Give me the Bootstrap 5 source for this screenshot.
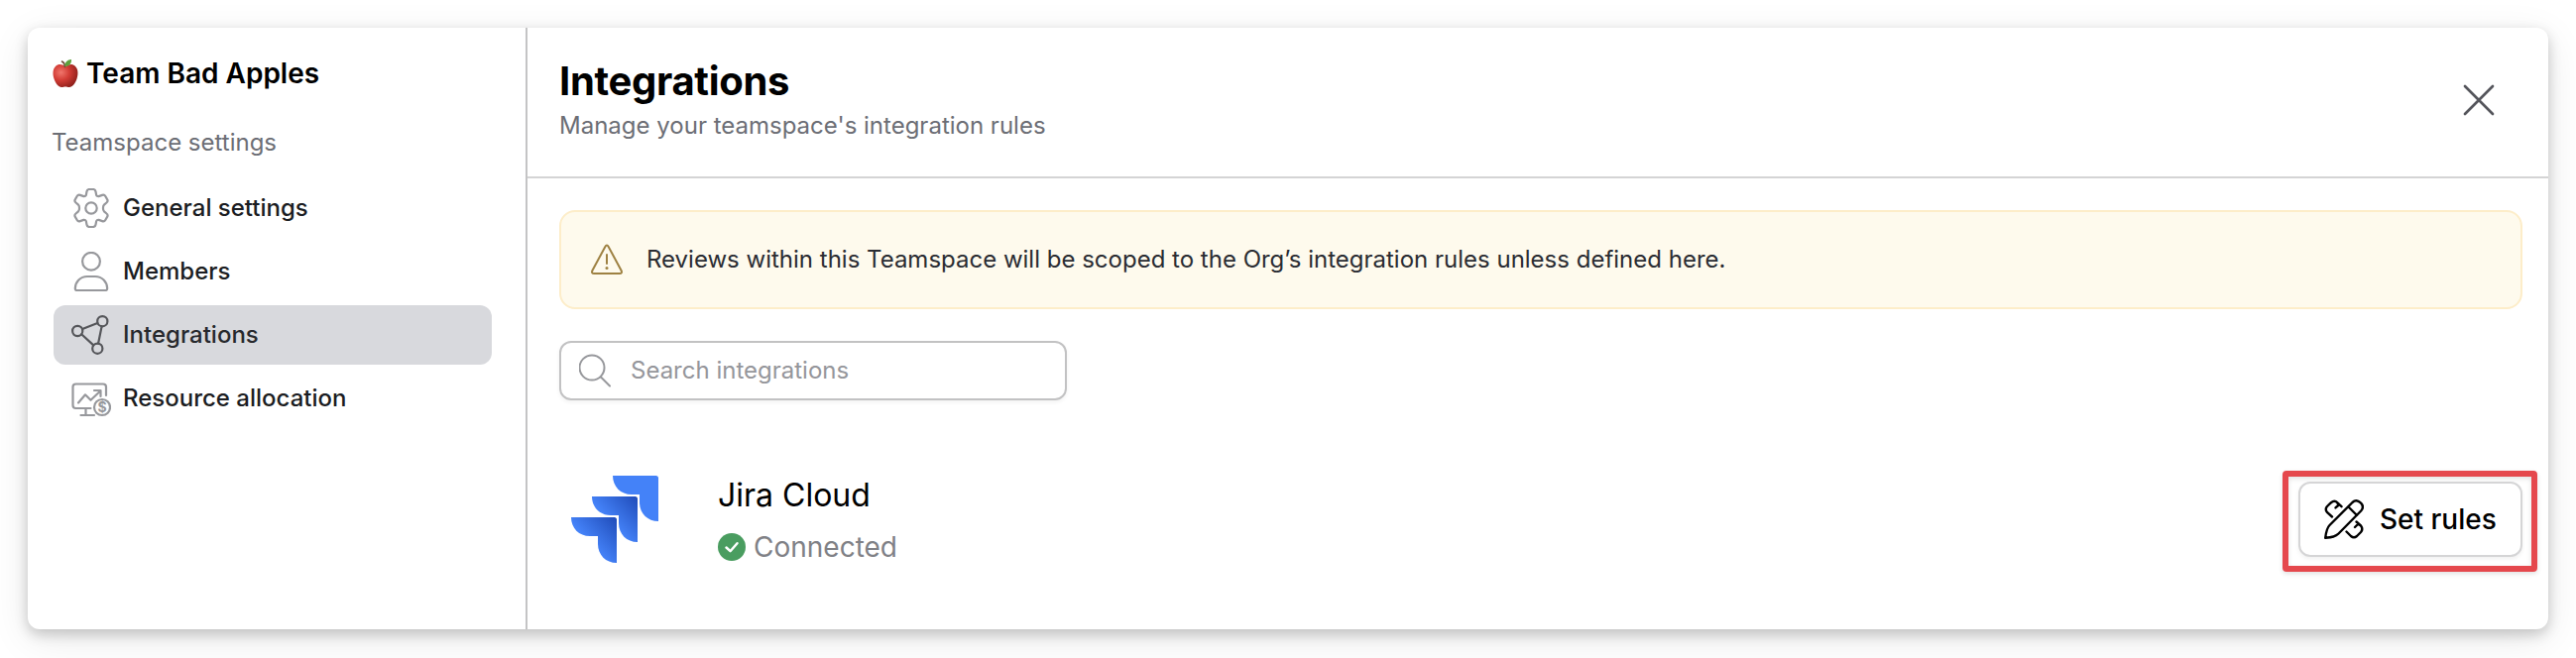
<!DOCTYPE html>
<html lang="en">
<head>
<meta charset="utf-8">
<title>Integrations</title>
<link href="https://cdn.jsdelivr.net/npm/bootstrap@5.3.0/dist/css/bootstrap.min.css" rel="stylesheet">
<style>
body{font-family:Inter,"Liberation Sans",sans-serif;font-size:24px;line-height:32px;color:#1b1d22;background:#fff;height:664px;overflow:hidden;padding:28px}
svg{display:block;flex:none;fill:none;stroke-linecap:round;stroke-linejoin:round}
.panel{height:607px;border-radius:12px;background:#fff;box-shadow:0 5px 14px rgba(0,0,0,.2),0 10px 40px rgba(0,0,0,.09)}
.side{width:504px;flex:none;border-right:2px solid #c4c4c5;padding:28px 34px 0 26px}
.team{font-size:28px;line-height:36px;font-weight:600;color:#000;gap:8px;margin-bottom:36px;margin-left:-1px}
.soft{color:#6c6e75}
.side .soft{line-height:32px;margin-bottom:20px;margin-left:-2px}
.side .nav{gap:4px}
.side .nav-link{height:60px;padding:0 18px;gap:12px;border-radius:12px;color:#1b1d22;font-weight:500}
.side .nav-link svg{stroke:#97989c;stroke-width:2.2}
.side .nav-link.active{background:#d8d9dd;color:#27292d}
.side .nav-link.active svg{stroke:#55565a}
.top-bar{height:152px;border-bottom:2px solid #d4d4d5;padding:0 50px 5px 32px}
.top-bar h1{font-size:40px;line-height:48px;font-weight:700;letter-spacing:-.3px;color:#000;margin:0}
.content-pad{padding:32px 26px 0 32px}
.notice{height:100px;border:2px solid #fdedc9;background:#fefaed;border-radius:16px;padding:0 30px;gap:24px;color:#2a2c32;margin-bottom:32px}
.search{width:512px;height:60px;border:2px solid #c2c2c3;border-radius:12px;padding:0 18px;gap:20px;color:#95969b;box-shadow:0 2px 4px rgba(0,0,0,.05)}
.integration{margin-top:71px;padding-left:12px;height:102px;margin-right:-15px}
.details{margin-left:60px;padding-top:5px}
.name{font-size:32px;line-height:40px;color:#000}
.status{font-size:28px;line-height:36px;color:#808186;gap:8px;margin-top:14px}
.marker{width:257px;height:102px;border:6px solid #e5484d;border-radius:4px;padding:5px 9px 9px 10px;box-shadow:0 2px 5px rgba(0,0,0,.12),inset 0 2px 5px rgba(0,0,0,.12)}
.rules{height:76px;border:2px solid #d5d5d6;border-radius:12px;background:#fff;color:#000;font-size:28px;font-weight:500;padding:0 0 0 24px;gap:16px;box-shadow:0 2px 4px rgba(0,0,0,.06)}
</style>
</head>
<body>
<div class="panel d-flex">
  <aside class="side">
    <div class="team d-flex align-items-center">
      <svg width="26" height="30" viewBox="0 0 26 30">
        <defs><radialGradient id="ap" cx=".32" cy=".35" r=".75"><stop offset="0" stop-color="#f0766c"/><stop offset=".45" stop-color="#d33d36"/><stop offset="1" stop-color="#8a1d19"/></radialGradient></defs>
        <path d="M13 8C16 6 20 5 23 8c3 3 3 8 1.500 12.500C23 25 20 29 17 29c-2 0-2.500-.6-4-.6s-2 .6-4 .6c-3 0-6-4-7.500-8.500C0 16 0 11 3 8c3-3 7-2 10 0z" fill="url(#ap)"/>
        <path d="M12.500 8.500C12.500 6 11.500 4 9.500 3" stroke="#6b4a35" stroke-width="1.600"/>
        <path d="M12.500 8C12 4 15 1 19 1c.3 4-2 7-6.500 7z" fill="#5da03c"/>
      </svg>
      <span>Team Bad Apples</span>
    </div>
    <div class="soft">Teamspace settings</div>
    <nav class="nav flex-column">
      <a class="nav-link d-flex align-items-center">
        <svg width="40" height="40" viewBox="0 0 40 40"><circle cx="20" cy="20" r="5.700"/><path d="M18.200 1h3.600c1.500 0 2.400.8 2.700 2.300l.6 3.200c.2 1.200 1.300 1.900 2.500 1.600l3.500-1.200c1.400-.5 2.500-.1 3.200 1.100l1.800 3.100c.8 1.300.5 2.500-.6 3.400l-2.500 2.200c-1.400 1.200-1.400 5.400 0 6.600l2.500 2.200c1.100.9 1.400 2.100.6 3.400l-1.800 3.100c-.7 1.200-1.800 1.600-3.200 1.100l-3.500-1.200c-1.200-.3-2.300.4-2.500 1.600l-.6 3.200c-.3 1.500-1.200 2.300-2.700 2.300h-3.600c-1.500 0-2.400-.8-2.700-2.300l-.6-3.200c-.2-1.200-1.300-1.900-2.500-1.600l-3.500 1.200c-1.400.5-2.500.1-3.200-1.100l-1.800-3.100c-.8-1.300-.5-2.500.6-3.400L7 23.300c1.400-1.200 1.400-5.400 0-6.600l-2.500-2.200c-1.100-.9-1.400-2.100-.6-3.400L5.700 8c.7-1.200 1.800-1.600 3.200-1.100l3.500 1.200c1.200.3 2.300-.4 2.500-1.600l.6-3.200C15.800 1.800 16.700 1 18.200 1z"/></svg>
        <span>General settings</span>
      </a>
      <a class="nav-link d-flex align-items-center">
        <svg width="40" height="40" viewBox="0 0 40 40"><circle cx="20" cy="9.800" r="8.900"/><path d="M16 25h8c7 0 12 5.500 12.200 12 0 1.400-.6 2-1.700 2h-29c-1.100 0-1.700-.6-1.700-2C4 30.500 9 25 16 25z"/></svg>
        <span>Members</span>
      </a>
      <a class="nav-link active d-flex align-items-center">
        <svg width="40" height="40" viewBox="0 0 40 40"><circle cx="31.300" cy="6.200" r="5.100"/><circle cx="6.200" cy="16" r="5.100"/><circle cx="26.300" cy="33.700" r="5.100"/><path d="M11.100 14.100 26.400 8.100M10.200 19.300 22.300 30.400M30.600 11.400 27.100 28.500"/></svg>
        <span>Integrations</span>
      </a>
      <a class="nav-link d-flex align-items-center">
        <svg width="40" height="40" viewBox="0 0 40 40"><path d="M35 17V8.500q0-3-3-3H4.500q-3 0-3 3V27q0 3 3 3H19.500M14.500 30.500V36M9.500 37H23M7 24.500l7-8.200 5.500 5.500L29 12.800M23 12h6.500v6"/><circle cx="31" cy="29" r="8"/><text x="31" y="34.200" text-anchor="middle" font-size="14" font-weight="700" fill="#97989c" stroke="none">$</text></svg>
        <span>Resource allocation</span>
      </a>
    </nav>
  </aside>
  <main class="flex-grow-1">
    <header class="top-bar d-flex align-items-center justify-content-between">
      <div>
        <h1>Integrations</h1>
        <div class="soft" style="margin-top:5px">Manage your teamspace's integration rules</div>
      </div>
      <svg width="40" height="40" viewBox="0 0 40 40" stroke="#55565c" stroke-width="2.700"><path d="M6 6 34 34M34 6 6 34"/></svg>
    </header>
    <div class="content-pad">
      <div class="notice d-flex align-items-center">
        <svg width="32" height="32" viewBox="0 0 32 32" stroke="#9e8142" stroke-width="2"><path d="M14.200 3.200q1.800-3.200 3.600 0L30.600 27q1.300 3-1.800 3H3.200q-3.100 0-1.800-3zM16 11v9"/><circle cx="16" cy="24.500" r="1.500" fill="#9e8142" stroke="none"/></svg>
        <span>Reviews within this Teamspace will be scoped to the Org’s integration rules unless defined here.</span>
      </div>
      <div class="search d-flex align-items-center">
        <svg width="32" height="34" viewBox="0 0 32 34" stroke="#97989c" stroke-width="2"><circle cx="13" cy="14" r="12.500"/><path d="M22 23.500 31 32.500"/></svg>
        <span>Search integrations</span>
      </div>
      <div class="integration d-flex align-items-start">
        <svg class="mt-1" width="88" height="90" viewBox="0 -1 88 90">
          <defs>
            <linearGradient id="jb" x1="1" y1="0" x2=".4" y2=".55"><stop offset="0" stop-color="#1f4bb8"/><stop offset="1" stop-color="#4482f8"/></linearGradient>
            <path id="jp" d="M0 0C0 11 8 19 19 19H27V27C27 38 35 46 46 46V2.500Q46 0 43.500 0Z"/>
          </defs>
          <use href="#jp" x="42" y="0" fill="#4482f8"/>
          <use href="#jp" x="21" y="21" fill="url(#jb)"/>
          <use href="#jp" x="0" y="42" fill="url(#jb)"/>
        </svg>
        <div class="details">
          <div class="name">Jira Cloud</div>
          <div class="status d-flex align-items-center">
            <svg width="28" height="28" viewBox="0 0 28 28"><circle cx="14" cy="14" r="14" fill="#4a9d60"/><path d="M8.500 14.500 12.500 18.200 19.500 10.200" stroke="#fff" stroke-width="2.500"/></svg>
            <span>Connected</span>
          </div>
        </div>
        <div class="marker ms-auto">
          <button class="rules btn w-100 d-flex align-items-center text-nowrap">
            <svg width="40" height="40" viewBox="0 0 40 40" stroke="#000" stroke-width="2.400"><path d="M1.200 38.800C2 32 3 28.500 5.500 26L28.500 3Q32.500-.6 36.500 3.200Q41 7.200 37.200 11.500L14.500 34.500C11.500 37.500 8 38 1.200 38.800zM24.500 7.500l8.500 8.500M8 17.500 3.200 13.200Q.4 10 3 7L7 3.200Q10.500.4 13.500 3.400L17.500 7.200M13.500 3.700 14.800 5.500 11.500 8.400M22.500 32.500 27 37Q30 39.600 33 37L37 33Q39.600 30 37 26.500L32.500 22.500M36 26 34.500 24.500 31 28"/></svg>
            <span>Set rules</span>
          </button>
        </div>
      </div>
    </div>
  </main>
</div>
<script src="https://cdn.jsdelivr.net/npm/bootstrap@5.3.0/dist/js/bootstrap.bundle.min.js"></script>
</body>
</html>
